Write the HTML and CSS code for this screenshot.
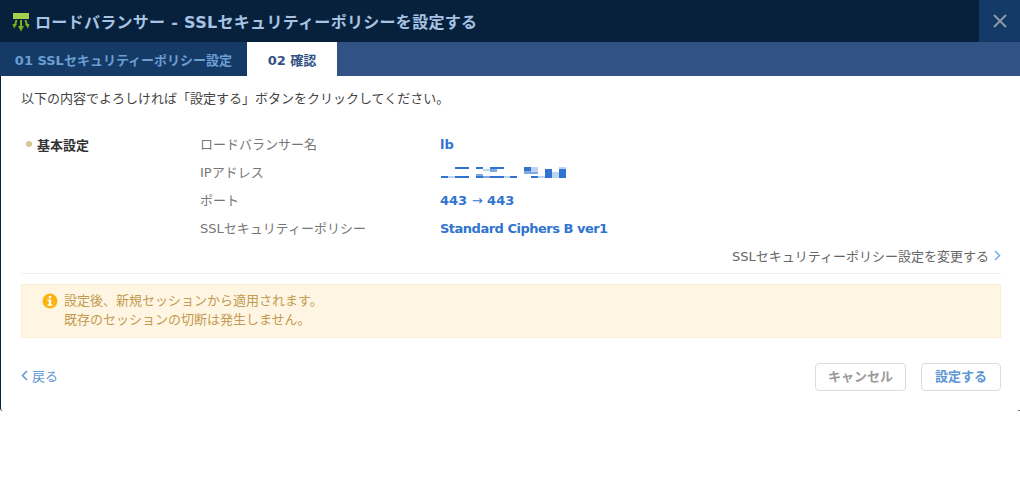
FILE: index.html
```html
<!DOCTYPE html>
<html lang="ja">
<head>
<meta charset="utf-8">
<title>ロードバランサー</title>
<link rel="stylesheet" href="styles.css">
</head>
<body>
<div class="modal">
  <header class="head">
    <svg class="logo" width="20" height="22" viewBox="0 0 20 22">
      <rect x="2" y="3" width="16" height="6" fill="#a5cf4d"/>
      <path d="M10 10v7M5.500 10 4 15M14.500 10 16 15" stroke="#7fb21a" stroke-width="2" fill="none"/>
      <path d="M7 16h6l-3 5.500zM1.500 14h4.500l-3 4.500zM14 14h4.500l-1.500 4.500z" fill="#7fb21a"/>
    </svg>
    <h1 class="title">ロードバランサー - SSLセキュリティーポリシーを設定する</h1>
    <button class="close" aria-label="閉じる">
      <svg width="14" height="14" viewBox="0 0 14 14"><path d="M1 1l12 12M13 1 1 13" stroke="#8d99a6" stroke-width="2"/></svg>
    </button>
  </header>
  <nav class="tabs">
    <div class="tab done">01 SSLセキュリティーポリシー設定</div>
    <div class="tab active">02 確認</div>
  </nav>
  <main class="body">
    <p class="lead">以下の内容でよろしければ「設定する」ボタンをクリックしてください。</p>
    <section class="basic">
      <div class="section-name"><span class="dot"></span>基本設定</div>
      <dl class="props">
        <dt>ロードバランサー名</dt><dd>lb</dd>
        <dt>IPアドレス</dt>
        <dd>
          <svg class="mask" width="127" height="12" viewBox="0 0 127 12" shape-rendering="crispEdges">
            <g fill="#2f74d0">
              <rect x="1" y="9" width="7" height="2"/><rect x="15" y="0" width="14" height="2"/><rect x="15" y="9" width="14" height="2"/>
              <rect x="36" y="0" width="7" height="2"/><rect x="50" y="0" width="14" height="2"/><rect x="36" y="9" width="7" height="2"/><rect x="50" y="9" width="14" height="2"/><rect x="70" y="9" width="7" height="2"/>
              <rect x="84" y="0" width="7" height="4"/><rect x="91" y="9" width="7" height="2"/><rect x="105" y="2" width="7" height="9"/><rect x="119" y="2" width="7" height="9"/>
            </g>
            <g fill="#bcd4f1">
              <rect x="8" y="9" width="7" height="2"/><rect x="43" y="2" width="14" height="2"/><rect x="64" y="9" width="6" height="2"/>
              <rect x="91" y="0" width="7" height="5"/><rect x="98" y="9" width="7" height="2"/><rect x="112" y="5" width="7" height="6"/><rect x="119" y="0" width="7" height="2"/>
            </g>
            <g fill="#7fa9e0">
              <rect x="43" y="9" width="7" height="2"/><rect x="50" y="2" width="7" height="3"/><rect x="36" y="7" width="7" height="2"/><rect x="84" y="4" width="7" height="3"/><rect x="91" y="5" width="7" height="2"/>
            </g>
          </svg>
        </dd>
        <dt>ポート</dt><dd>443 <span class="arrow">→</span> 443</dd>
        <dt>SSLセキュリティーポリシー</dt><dd class="policy">Standard Ciphers B ver1</dd>
      </dl>
    </section>
    <div class="change">
      <span>SSLセキュリティーポリシー設定を変更する</span>
      <svg width="7" height="11" viewBox="0 0 7 11"><path d="M1 1l4.500 4.500L1 10" stroke="#73aee6" stroke-width="1.500" fill="none"/></svg>
    </div>
    <div class="notice">
      <svg class="info" width="16" height="16" viewBox="0 0 16 16">
        <circle cx="8" cy="8" r="7.500" fill="#fbb30f"/>
        <rect x="6.800" y="3" width="2.400" height="2.300" fill="#fff"/>
        <path d="M5.500 6.500h3.700v5h1.300v1.300h-5v-1.300h1.300v-3.700h-1.300z" fill="#fff"/>
      </svg>
      <p class="notice-text">設定後、新規セッションから適用されます。<br>既存のセッションの切断は発生しません。</p>
    </div>
    <footer class="foot">
      <a class="back">
        <svg width="7" height="11" viewBox="0 0 7 11"><path d="M6 1 1.500 5.500 6 10" stroke="#5d96d2" stroke-width="1.500" fill="none"/></svg>
        <span>戻る</span>
      </a>
      <div class="actions">
        <button class="btn cancel">キャンセル</button>
        <button class="btn submit">設定する</button>
      </div>
    </footer>
  </main>
</div>
</body>
</html>
```
FILE: styles.css
```css
* { box-sizing: border-box; }
html, body { margin: 0; background: #fff; }
body {
  font-family: "DejaVu Sans", "Noto Sans CJK JP", sans-serif;
  font-size: 13px;
  color: #333;
  overflow: hidden;
}
.modal {
  position: relative;
  width: 1020px;
  height: 411px;
  border-left: 1px solid #07213d;
  border-bottom-left-radius: 3px;
  background: #fff;
}
.modal::after {
  content: "";
  position: absolute;
  right: 0;
  bottom: 0;
  width: 2px;
  height: 1px;
  background: #5a6a7c;
}
.head {
  height: 42px;
  margin-left: -1px;
  background: #07213d;
  display: flex;
  align-items: center;
  padding-left: 11px;
}
.logo { flex: none; margin-right: 4px; }
.title {
  flex: 1;
  margin: 0;
  font-size: 16px;
  font-weight: 700;
  letter-spacing: 0.3px;
  color: #a7c3e3;
  white-space: nowrap;
}
.close {
  width: 41px;
  height: 42px;
  border: 0;
  padding: 0 0 1px;
  background: #133a66;
  display: flex;
  align-items: center;
  justify-content: center;
}
.tabs {
  height: 34px;
  margin-left: -1px;
  background: #315284;
  display: flex;
}
.tab {
  display: flex;
  align-items: center;
  justify-content: center;
  font-size: 13px;
  font-weight: 700;
  white-space: nowrap;
}
.tab.done { width: 247px; background: #153a66; color: #6b9fd4; }
.tab.active { width: 90px; background: #fff; color: #315284; }
.body { padding: 0 19px 0 20px; }
.lead { margin: 0; padding-top: 13px; height: 45px; line-height: 20px; color: #444; }
.basic { display: flex; margin-top: 8px; }
.section-name {
  width: 179px;
  padding: 2px 0 0 5px;
  display: flex;
  align-items: center;
  height: 28px;
  font-weight: 700;
  color: #333;
}
.dot { width: 6px; height: 6px; border-radius: 50%; background: #d8c49a; margin-right: 5px; }
.props {
  margin: 0;
  display: grid;
  grid-template-columns: 240px auto;
  grid-auto-rows: 28px;
  align-items: center;
}
.props dt { color: #777; }
.props dd { margin: 0; padding-top: 2px; color: #2f74d0; font-weight: 700; }
.props .policy { letter-spacing: -0.5px; }
.arrow { font-weight: 400; }
.mask { display: block; margin-top: 1px; }
.change {
  display: flex;
  justify-content: flex-end;
  align-items: center;
  gap: 5px;
  height: 33px;
  padding: 0 0 4px;
  color: #666;
  border-bottom: 1px solid #eee;
}
.notice {
  margin-top: 10px;
  height: 54px;
  padding: 0 0 2px 20px;
  background: #fef6e3;
  border: 1px solid #fbeed3;
  display: flex;
  align-items: center;
}
.info { flex: none; margin-right: 6px; align-self: flex-start; margin-top: 8px; }
.notice-text {
  margin: 0;
  line-height: 19px;
  font-size: 13px;
  color: #c49a52;
}
.foot {
  margin-top: 25px;
  display: flex;
  justify-content: space-between;
  align-items: center;
  height: 28px;
}
.back {
  display: flex;
  align-items: center;
  gap: 4px;
  color: #5d96d2;
  padding-bottom: 4px;
}
.actions { display: flex; gap: 15px; }
.btn {
  height: 28px;
  background: #fff;
  border: 1px solid #dcdcdc;
  border-radius: 4px;
  font: 700 13px "DejaVu Sans", "Noto Sans CJK JP", sans-serif;
  padding: 0 0 4px;
}
.cancel { width: 91px; color: #9a9a9a; }
.submit { width: 80px; color: #5d96d2; }
```
